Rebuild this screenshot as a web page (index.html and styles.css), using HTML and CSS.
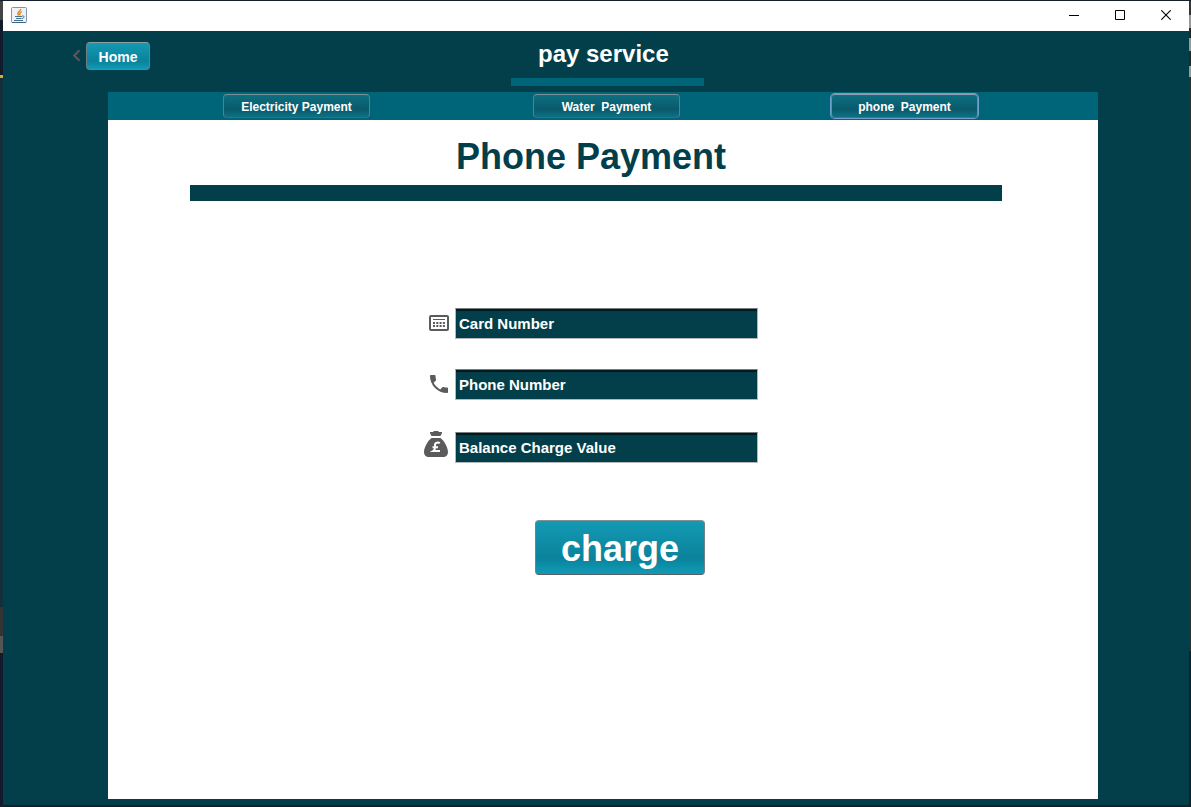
FILE: index.html
```html
<!DOCTYPE html>
<html lang="en">
<head>
<meta charset="utf-8">
<title>pay service</title>
<link rel="stylesheet" href="styles.css">
</head>
<body>
<div class="desktop">
  <div class="edge edge-left"></div>
  <div class="window">
    <div class="titlebar">
      <svg class="app-icon" width="16" height="16" viewBox="0 0 16 16" aria-hidden="true">
        <rect x=".5" y=".5" width="15" height="15" rx="1" fill="#edf2f6" stroke="#7d98aa"/>
        <path d="M1 15.500h14" stroke="#3f6580"/>
        <path d="M9.800 2C9.500 4.500 5 5 7.500 8.500M11 4.500C8 5.500 8.500 7 9 8.500" fill="none" stroke="#e8811a" stroke-width="1.300"/>
        <path d="M4 9.500h7M5 11.500h5.500M3 13.500h9M11 9c3-.5 2.500 2 0 2.500" fill="none" stroke="#44708f" stroke-width="1"/>
      </svg>
      <div class="controls">
        <button class="control" aria-label="Minimize"><svg width="10" height="10" viewBox="0 0 10 10"><path d="M0 5.500h10" stroke="#000"/></svg></button>
        <button class="control" aria-label="Maximize"><svg width="10" height="10" viewBox="0 0 10 10"><path d="M.5.5h9v9h-9z" fill="none" stroke="#000"/></svg></button>
        <button class="control" aria-label="Close"><svg width="10" height="10" viewBox="0 0 10 10"><path d="M.3.3l9.400 9.400M9.700.3L.3 9.700" stroke="#000" stroke-width="1.100"/></svg></button>
      </div>
    </div>
    <header class="header">
      <div class="home">
        <svg width="9" height="13" viewBox="0 0 9 13" aria-hidden="true"><path d="M7.500 1.200L2.200 6.500l5.300 5.300" fill="none" stroke="#5a5a5c" stroke-width="2"/></svg>
        <button class="btn btn-home">Home</button>
      </div>
      <div class="brand">pay service</div>
    </header>
    <main class="content">
      <nav class="tabs">
        <button class="btn tab">Electricity Payment</button>
        <button class="btn tab">Water  Payment</button>
        <button class="btn tab tab-active">phone  Payment</button>
      </nav>
      <section class="panel">
        <h1 class="title">Phone Payment</h1>
        <div class="rule"></div>
        <form class="form">
          <div class="field">
            <label class="icon" for="card"><svg width="26" height="28" viewBox="0 0 26 28" role="img" aria-label="Card number"><rect x="6" y="6" width="18" height="14" rx="1" fill="none" stroke="#5b5b5b" stroke-width="2"/><path d="M9 9.500h12" stroke="#5b5b5b"/><path d="M9 13h12M9 16h12" stroke="#5b5b5b" stroke-width="2" stroke-dasharray="2 1.300"/></svg></label>
            <input class="input" id="card" type="text" value="Card Number">
          </div>
          <div class="field">
            <label class="icon" for="phone"><svg width="26" height="28" viewBox="0 0 26 28" role="img" aria-label="Phone number"><path transform="translate(3 1)" d="M6.620 10.790c1.440 2.830 3.760 5.140 6.590 6.590l2.200-2.200c.27-.27.67-.36 1.020-.24 1.120.37 2.330.57 3.570.57.55 0 1 .45 1 1V20c0 .55-.45 1-1 1-9.390 0-17-7.610-17-17 0-.55.45-1 1-1h3.500c.55 0 1 .45 1 1 0 1.250.2 2.450.57 3.570.11.35.03.74-.25 1.020z" fill="#5b5b5b"/></svg></label>
            <input class="input" id="phone" type="text" value="Phone Number">
          </div>
          <div class="field field-last">
            <label class="icon icon-bag" for="balance"><svg width="26" height="28" viewBox="0 0 26 28" role="img" aria-label="Balance charge value"><path d="M6 2h3l1-1h4l1 1h3v1l-1.500 3h-9L6 3zM7.500 8h9C20 10.500 24 17.500 24 22c0 3-2 5-5 5H5c-3 0-5-2-5-5C0 17.500 4 10.500 7.500 8z" fill="#5b5b5b"/><path d="M15.800 13.100c-1.300-.8-5-1-4.800 1.900 0 2.700.6 4.500-1.800 6H16M8.500 17.200h5.500" fill="none" stroke="#fff" stroke-width="2"/></svg></label>
            <input class="input" id="balance" type="text" value="Balance Charge Value">
          </div>
          <button class="btn charge" type="button">charge</button>
        </form>
      </section>
    </main>
  </div>
  <div class="edge edge-right"></div>
</div>
</body>
</html>
```
FILE: styles.css
```css
* {
  box-sizing: border-box;
}

body {
  margin: 0;
  font-family: "Liberation Sans", Arial, sans-serif;
  font-weight: bold;
}

.desktop {
  display: flex;
  min-height: 100vh;
  padding: 1px 0 2px;
  background: #14202b;
}

.edge {
  flex: none;
}

.edge-left {
  width: 3px;
  background: linear-gradient(#444 0 19px, #111b2c 19px 74px, #d9a441 74px 77px, #10303a 77px 606px, #343434 606px 635px, #555 635px 652px, #111b2c 652px);
}

.edge-right {
  width: 2px;
  background: linear-gradient(#333 0 14px, #999 14px 27px, #262626 27px 37px, #999 37px 50px, #262626 50px 65px, #999 65px 76px, #2d2f31 76px 650px, #14202b 650px);
}

.window {
  display: flex;
  flex: 1;
  flex-direction: column;
  background: #033f4a;
}

.titlebar {
  display: flex;
  align-items: center;
  justify-content: space-between;
  height: 30px;
  padding: 0 0 2px 8px;
  background: #fff;
}

.controls {
  display: flex;
}

.control {
  display: flex;
  align-items: center;
  justify-content: center;
  width: 46px;
  height: 28px;
  padding: 0;
  border: 0;
  background: none;
}

.header {
  display: grid;
  grid-template-columns: 1fr 193px 1fr;
  height: 61px;
  padding-left: 23px;
}

.home {
  display: flex;
  align-items: center;
  gap: 5px;
  height: 28px;
  margin: 11px 0 0 46px;
}

.home svg {
  margin-bottom: 2px;
}

.btn {
  padding: 2px 0 0;
  border: 1px solid #6f7f84;
  border-top-color: #8b9da2;
  border-radius: 4px;
  color: #fff;
  font: inherit;
  white-space: pre;
  background: linear-gradient(#149ab4, #0b829b 70%, #109bb7);
}

.btn-home {
  width: 64px;
  height: 28px;
  font-size: 14px;
}

.brand {
  height: 55px;
  padding: 9px 0 0 27px;
  border-bottom: 8px solid #006578;
  color: #fff;
  font-size: 24px;
  line-height: 28px;
}

.content {
  display: flex;
  flex: 1;
  flex-direction: column;
  margin: 0 91px 6px 105px;
}

.tabs {
  display: grid;
  grid-template-columns: 377fr 243fr 353fr;
  place-items: center;
  height: 28px;
  padding-right: 17px;
  background: #006578;
}

.tab {
  width: 147px;
  height: 24px;
  border-color: #7b8f96 #667a82 #59626b;
  font-size: 12px;
  background: linear-gradient(#0d7081, #09596a 65%, #0c7184);
}

.tab-active {
  box-shadow: 0 0 0 1px #6f9fcb;
  border-color: #8c9cae #6f8ba2 #71606b;
}

.panel {
  flex: 1;
  padding: 16px 96px 40px 82px;
  background: #fff;
}

.title {
  margin: 0 10px 7px 0;
  color: #033f4a;
  font-size: 36px;
  line-height: 42px;
  text-align: center;
}

.rule {
  height: 16px;
  background: #033f4a;
}

.form {
  display: flex;
  flex-direction: column;
  align-items: center;
  gap: 30px;
  padding-top: 107px;
}

.field {
  display: flex;
  align-items: center;
  gap: 5px;
  margin-right: 10px;
}

.field-last {
  margin-top: 2px;
}

.icon {
  display: flex;
  width: 26px;
}

.icon-bag {
  align-self: flex-start;
  align-items: flex-end;
  height: 26px;
}

.input {
  width: 303px;
  height: 31px;
  padding: 0 3px 1px;
  border: 1px solid #b4b8bb;
  border-top-color: #777c7e;
  border-radius: 0;
  color: #fff;
  font: inherit;
  font-size: 15px;
  background: #033f4a;
  box-shadow: inset 0 2px 1px #011a20;
}

.charge {
  width: 170px;
  height: 55px;
  margin: 27px 0 0 48px;
  border-color: #7d9196 #718388 #555f63;
  font-size: 36px;
}
```
